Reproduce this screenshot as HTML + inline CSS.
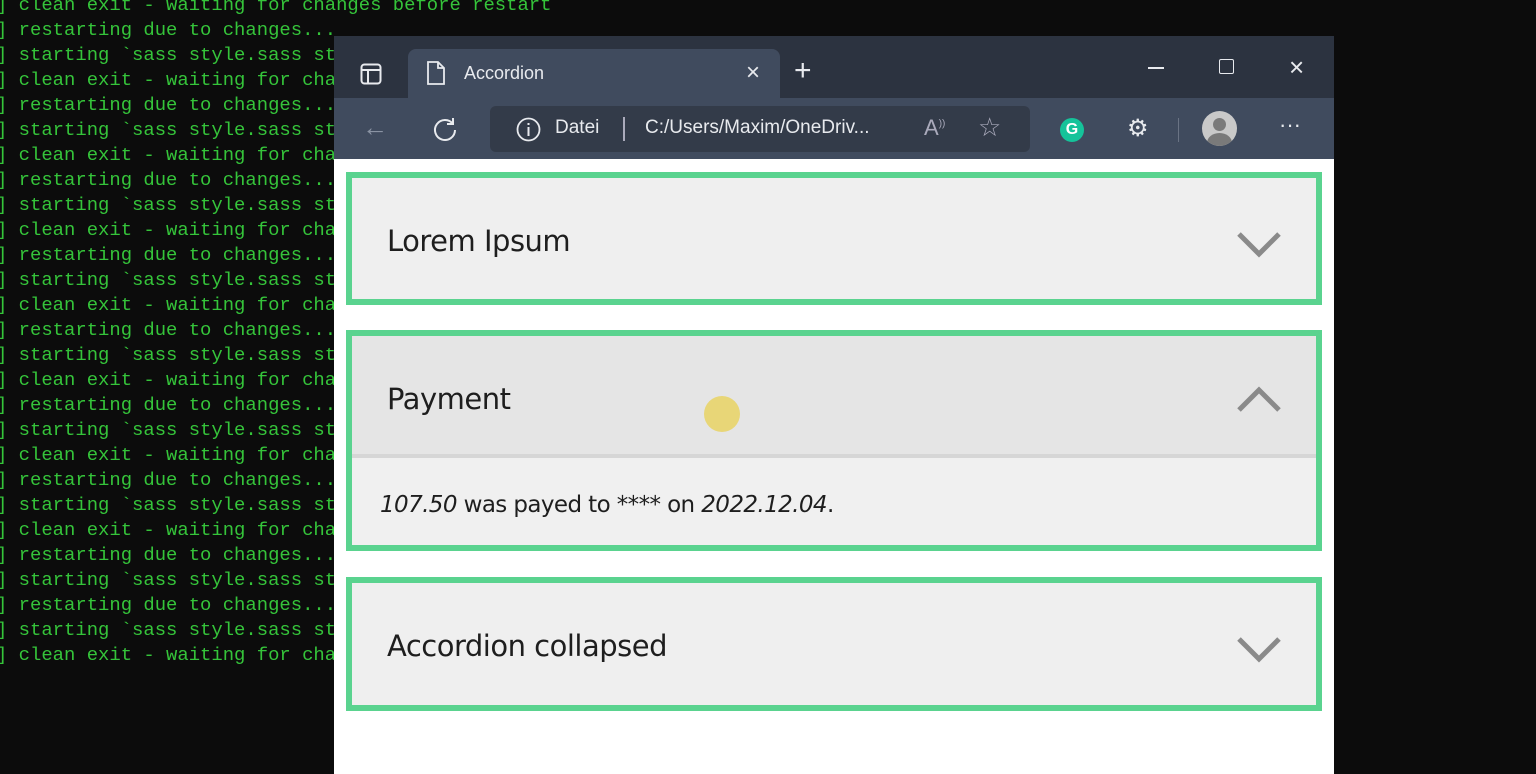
<!DOCTYPE html>
<html><head><meta charset="utf-8"><style>
*{margin:0;padding:0;box-sizing:border-box}
body{width:1536px;height:774px;background:#0c0c0c;position:relative;overflow:hidden;font-family:"Liberation Sans",sans-serif}
.term{position:absolute;left:-4px;top:-7px;font-family:"Liberation Mono",monospace;font-size:18.9px;line-height:25px;color:#35c43a;white-space:pre}
.win{position:absolute;left:334px;top:36px;width:1000px;height:738px;background:#fff}
.title{position:absolute;left:0;top:0;width:1000px;height:62px;background:#2c3340}
.tab{position:absolute;left:74px;top:13px;width:372px;height:49px;background:#404b5e;border-radius:8px 8px 0 0}
.tool{position:absolute;left:0;top:62px;width:1000px;height:61px;background:#404b5e}
.addr{position:absolute;left:156px;top:8px;width:540px;height:46px;background:#333b49;border-radius:6px}
.t{position:absolute;color:#e8eaee;font-size:19px}
.acc{position:absolute;left:12px;width:976px;border:6px solid #5ad38f;background:#efefef}
.acc .h{position:absolute;left:35px;font-size:29px;color:#1e1e1e;font-family:"DejaVu Sans",sans-serif;letter-spacing:-0.5px}
svg{position:absolute}
</style></head><body>
<div class="term">] clean exit - waiting for changes before restart
] restarting due to changes...
] starting `sass style.sass style.css`
] clean exit - waiting for changes before restart
] restarting due to changes...
] starting `sass style.sass style.css`
] clean exit - waiting for changes before restart
] restarting due to changes...
] starting `sass style.sass style.css`
] clean exit - waiting for changes before restart
] restarting due to changes...
] starting `sass style.sass style.css`
] clean exit - waiting for changes before restart
] restarting due to changes...
] starting `sass style.sass style.css`
] clean exit - waiting for changes before restart
] restarting due to changes...
] starting `sass style.sass style.css`
] clean exit - waiting for changes before restart
] restarting due to changes...
] starting `sass style.sass style.css`
] clean exit - waiting for changes before restart
] restarting due to changes...
] starting `sass style.sass style.css`
] restarting due to changes...
] starting `sass style.sass style.css`
] clean exit - waiting for changes before restart</div>
<div class="win">
<div class="title">
 <svg style="left:26px;top:27px" width="22" height="22" viewBox="0 0 22 22"><rect x="1.5" y="1.5" width="19" height="19" rx="3" fill="none" stroke="#e8eaee" stroke-width="2"/><path d="M2 7H20M8 7V20" stroke="#e8eaee" stroke-width="2"/></svg>
 <div class="tab">
  <svg style="left:18px;top:11px" width="20" height="26" viewBox="0 0 20 26"><path d="M2 2H12L18 8V24H2Z M12 2V8H18" fill="none" stroke="#e8eaee" stroke-width="1.8"/></svg>
  <div class="t" style="left:56px;top:14px;font-size:18px">Accordion</div>
  <div class="t" style="left:338px;top:10px;font-size:24px">×</div>
 </div>
 <div class="t" style="left:460px;top:18px;font-size:30px;font-weight:300">+</div>
 <div style="position:absolute;left:814px;top:31px;width:16px;height:1.5px;background:#e8eaee"></div>
 <div style="position:absolute;left:885px;top:23px;width:15px;height:15px;border:1.5px solid #e8eaee;border-radius:2px"></div>
 <div class="t" style="left:955px;top:16px;font-size:26px">×</div>
</div>
<div class="tool">
 <div class="t" style="left:28px;top:14px;font-size:26px;color:#8a93a3">←</div>
 <svg style="left:98px;top:18px" width="26" height="26" viewBox="0 0 26 26"><path d="M21 8A10 10 0 1 0 23 14M21 2V8H15" fill="none" stroke="#e8eaee" stroke-width="2"/></svg>
 <div class="addr">
  <svg style="left:26px;top:11px" width="25" height="25" viewBox="0 0 25 25"><circle cx="12.5" cy="12.5" r="11" fill="none" stroke="#e8eaee" stroke-width="1.8"/><path d="M12.5 10V19M12.5 6V8" stroke="#e8eaee" stroke-width="2"/></svg>
  <div class="t" style="left:65px;top:11px">Datei</div>
  <div style="position:absolute;left:133px;top:11px;width:1.5px;height:24px;background:#aab"></div>
  <div class="t" style="left:155px;top:11px">C:/Users/Maxim/OneDriv...</div>
  <div class="t" style="left:434px;top:9px;color:#aab;font-size:22px">A<sup style="font-size:10px">))</sup></div>
  <div class="t" style="left:488px;top:6px;color:#aab;font-size:26px">☆</div>
 </div>
 <div style="position:absolute;left:726px;top:20px;width:24px;height:24px;border-radius:50%;background:#15c39a;color:#fff;font-weight:bold;font-size:16px;text-align:center;line-height:24px">G</div>
 <div class="t" style="left:793px;top:16px;font-size:24px">⚙</div>
 <div style="position:absolute;left:844px;top:20px;width:1px;height:24px;background:#6a7384"></div>
 <div style="position:absolute;left:868px;top:13px;width:35px;height:35px;border-radius:50%;background:#c9c9c9;overflow:hidden"><div style="position:absolute;left:11px;top:7px;width:13px;height:13px;border-radius:50%;background:#7a7a7a"></div><div style="position:absolute;left:5px;top:22px;width:25px;height:20px;border-radius:50%;background:#7a7a7a"></div></div>
 <div class="t" style="left:945px;top:14px;font-size:22px">···</div>
</div>
<div class="acc" style="top:136px;height:133px"><div class="h" style="top:46px">Lorem Ipsum</div>
 <svg style="left:883px;top:52px" width="50" height="30"><path d="M4 4L24 24L44 4" fill="none" stroke="#8a8a8a" stroke-width="5"/></svg></div>
<div class="acc" style="top:294px;height:221px;background:#f0f0f0">
 <div style="position:absolute;left:0;top:0;width:964px;height:122px;background:#e5e5e5;border-bottom:4px solid #d6d6d6"></div>
 <div class="h" style="top:46px">Payment</div>
 <svg style="left:883px;top:48px" width="50" height="30"><path d="M4 26L24 6L44 26" fill="none" stroke="#8a8a8a" stroke-width="5"/></svg>
 <div style="position:absolute;left:352px;top:60px;width:36px;height:36px;border-radius:50%;background:#e8d46a;opacity:.9"></div>
 <div style="position:absolute;left:28px;top:156px;font-size:23px;color:#1e1e1e;font-family:'DejaVu Sans',sans-serif;letter-spacing:-0.6px"><i>107.50</i> was payed to **** on <i>2022.12.04</i>.</div>
</div>
<div class="acc" style="top:541px;height:134px"><div class="h" style="top:46px">Accordion collapsed</div>
 <svg style="left:883px;top:52px" width="50" height="30"><path d="M4 4L24 24L44 4" fill="none" stroke="#8a8a8a" stroke-width="5"/></svg></div>
</div>
</body></html>
